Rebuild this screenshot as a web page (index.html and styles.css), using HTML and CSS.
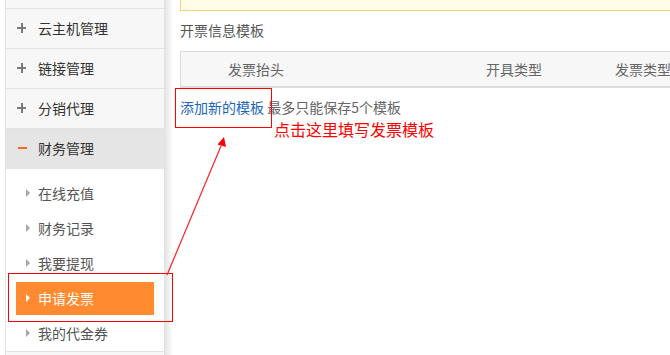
FILE: index.html
```html
<!DOCTYPE html>
<html lang="zh">
<head>
<meta charset="utf-8">
<title>申请发票</title>
<link rel="stylesheet" href="styles.css">
</head>
<body>
<div class="page">
  <aside class="sidebar">
    <div class="nav-stub"></div>
    <div class="nav-head"><span class="ico plus"></span>云主机管理</div>
    <div class="nav-head"><span class="ico plus"></span>链接管理</div>
    <div class="nav-head"><span class="ico plus"></span>分销代理</div>
    <div class="nav-head active"><span class="ico minus"></span>财务管理</div>
    <ul class="sub">
      <li class="sub-item"><span class="tri"></span>在线充值</li>
      <li class="sub-item"><span class="tri"></span>财务记录</li>
      <li class="sub-item"><span class="tri"></span>我要提现</li>
      <li class="sub-item current"><span class="tri"></span>申请发票</li>
      <li class="sub-item"><span class="tri"></span>我的代金券</li>
    </ul>
    <div class="nav-stub bottom"></div>
  </aside>
  <div class="shade"></div>
  <main class="main">
    <div class="notice"></div>
    <div class="title">开票信息模板</div>
    <div class="thead">
      <span class="th c1">发票抬头</span>
      <span class="th c2">开具类型</span>
      <span class="th c3">发票类型</span>
    </div>
    <div class="add-row"><a class="add-link">添加新的模板</a> 最多只能保存5个模板</div>
  </main>
</div>

<div class="mark mark-add"></div>
<div class="mark mark-nav"></div>
<div class="hint">点击这里填写发票模板</div>
<svg class="arrow" width="670" height="355" viewBox="0 0 670 355">
  <line x1="167" y1="275" x2="221" y2="146" stroke="#ff2020" stroke-width="1.2"/>
  <polygon points="224,137 217.5,144.5 226,147" fill="#ff0000"/>
</svg>
</body>
</html>
```

FILE: styles.css
```css
* { box-sizing: border-box; margin: 0; padding: 0; }
html, body { width: 670px; height: 355px; overflow: hidden; background: #fff; }
body {
  font-family: "Noto Sans CJK SC", "Noto Sans", sans-serif;
  font-size: 14px;
  color: #555;
  position: relative;
}
.page { display: flex; height: 355px; }

.sidebar {
  width: 160px;
  margin-left: 5px;
  border-left: 1px solid #e2e2e2;
  border-right: 1px solid #e2e2e2;
  background: #f7f7f7;
  flex: none;
}
.nav-stub { height: 8px; }
.nav-stub.bottom { height: 4px; border-top: 1px solid #e2e2e2; }
.nav-head {
  height: 40px;
  border-top: 1px solid #e2e2e2;
  display: flex;
  align-items: center;
  padding-left: 11px;
  padding-bottom: 2px;
  color: #333;
  font-size: 14px;
}
.nav-head.active { background: #e5e5e5; height: 41px; }
.ico { width: 21px; height: 10px; position: relative; flex: none; }
.ico.plus::before, .ico.plus::after, .ico.minus::before {
  content: "";
  position: absolute;
  background: #7a7a7a;
}
.ico.plus::before { left: 0; top: 4px; width: 9px; height: 2px; }
.ico.plus::after { left: 3.5px; top: 0; width: 2px; height: 10px; }
.ico.minus::before { left: 1px; top: 4px; width: 9px; height: 2px; background: #ff6a1a; }

.sub {
  list-style: none;
  background: #fff;
  padding-top: 7px;
  display: flex;
  flex-direction: column;
}
.sub-item {
  height: 33px;
  margin: 1px 10px;
  display: flex;
  align-items: center;
  padding-left: 10px;
  padding-bottom: 1px;
  color: #555;
  font-size: 14px;
}
.tri {
  width: 0; height: 0;
  border-top: 4px solid transparent;
  border-bottom: 4px solid transparent;
  border-left: 4px solid #a6a6a6;
  margin-right: 8px;
}
.sub-item.current { background: #ff8a30; color: #fff; }
.sub-item.current .tri { border-left-color: #fff; }

.shade {
  width: 8px;
  flex: none;
  background: linear-gradient(to right, #e4e4e4, #ffffff);
}
.main { flex: 1; padding-left: 7px; min-width: 0; }
.notice {
  height: 11px;
  background: #fffde8;
  border-left: 1px solid #ffd27f;
  border-bottom: 1px solid #ffd27f;
}
.title { margin-top: 9px; line-height: 20px; color: #555; }
.thead {
  margin-top: 11px;
  height: 37px;
  background: #f7f7f7;
  border-top: 1px solid #dcdcdc;
  border-left: 1px solid #dcdcdc;
  border-bottom: 2px solid #dcdcdc;
  display: grid;
  grid-template-columns: 305px 129px 1fr;
  align-items: center;
  color: #666;
  white-space: nowrap;
}
.th.c1 { padding-left: 47px; }
.add-row { margin-top: 9px; line-height: 20px; color: #666; white-space: nowrap; }
.add-link { color: #1c65c2; text-decoration: none; }

.mark { position: absolute; border: 1px solid #ff0000; }
.mark-add { left: 175px; top: 88px; width: 97px; height: 40px; }
.mark-nav { left: 8px; top: 273px; width: 165px; height: 49px; }
.hint {
  position: absolute;
  left: 274px;
  top: 118px;
  font-size: 16px;
  line-height: 22px;
  color: #ff0000;
  white-space: nowrap;
}
.arrow { position: absolute; left: 0; top: 0; pointer-events: none; }
```
